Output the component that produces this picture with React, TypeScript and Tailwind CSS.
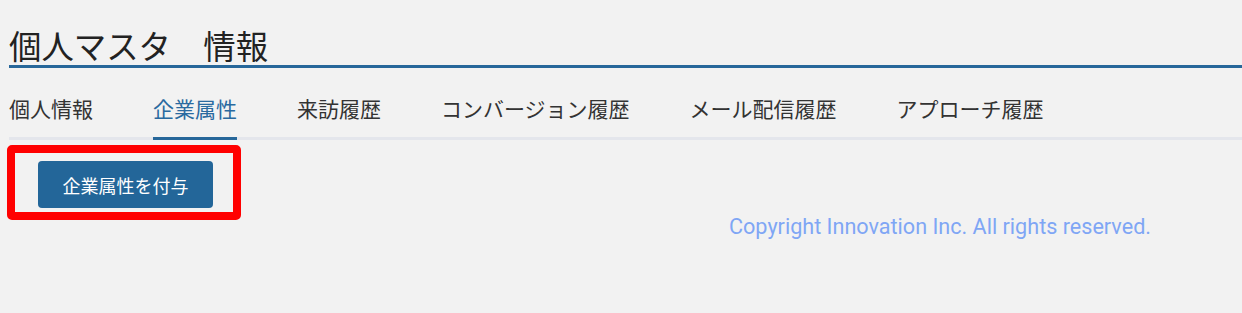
const tabs = ["個人情報", "企業属性", "来訪履歴", "コンバージョン履歴", "メール配信履歴", "アプローチ履歴"];

export default function App() {
  const active = 1;
  return (
    <main
      className="min-h-[313px] w-full bg-[#f2f2f2] pl-[9px]"
      style={{ fontFamily: '"Noto Sans CJK JP", "Noto Sans", sans-serif' }}
    >
      <h1 className="border-b-[3px] border-[#27679a] pt-[29px] pb-[4px] text-[32.4px] leading-[32px] font-normal text-[#222]">
        個人マスタ　情報
      </h1>

      <nav className="flex gap-[60px] border-b-[3px] border-[#e4e6ec]">
        {tabs.map((t, i) => (
          <div
            key={t}
            className={
              i === active
                ? "-mb-[3px] border-b-[3px] border-[#27679a] pt-[30px] pb-[18px] text-[21px] leading-[21px] text-[#2a6aa0]"
                : "-mb-[3px] border-b-[3px] border-transparent pt-[30px] pb-[18px] text-[21px] leading-[21px] text-[#333]"
            }
          >
            {t}
          </div>
        ))}
      </nav>

      <div className="flex items-start">
        <div className="-ml-[2px] mt-[5px] h-[75px] w-[234px] rounded-[5px] border-[8px] border-[#ff0000] pl-[23px] pt-[8px]">
          <button className="flex h-[47px] w-[175px] items-center justify-center rounded-[4px] bg-[#236699] text-[18px] leading-[18px] text-white">
            企業属性を付与
          </button>
        </div>
        <p
          className="ml-[488px] mt-[74px] text-[21.6px] leading-[26px] text-[#7fa6f5]"
          style={{ fontFamily: "Roboto, sans-serif" }}
        >
          Copyright Innovation Inc. All rights reserved.
        </p>
      </div>
    </main>
  );
}
